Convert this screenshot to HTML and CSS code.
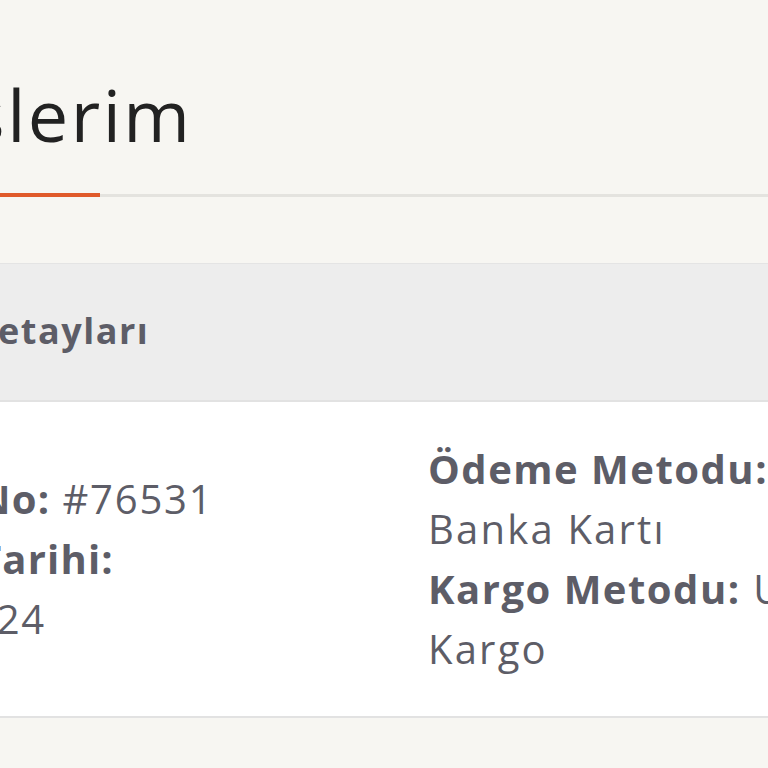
FILE: index.html
```html
<!DOCTYPE html>
<html lang="tr">
<head>
<meta charset="utf-8">
<title>Siparişlerim</title>
<link rel="stylesheet" href="styles.css">
</head>
<body>
<main class="page">
  <header class="title-block">
    <h1 class="title">Siparişlerim</h1>
  </header>
  <div class="tabs">
    <span class="tab-active"></span>
    <span class="tab-rest"></span>
  </div>
  <section class="card">
    <div class="card-head">
      <h2 class="card-title">Sipariş Detayları</h2>
    </div>
    <div class="card-body">
      <div class="col col-left">
        <p><b>Sipariş No:</b> #76531</p>
        <p><b>Sipariş Tarihi:</b> 12.03.2024</p>
      </div>
      <div class="col col-right">
        <p><b>Ödeme Metodu:</b> Banka Kartı</p>
        <p><b>Kargo Metodu:</b> UPS Kargo</p>
      </div>
    </div>
  </section>
</main>
</body>
</html>
```

FILE: styles.css
```css
html, body {
  margin: 0;
  padding: 0;
}

body {
  background: #f7f6f2;
  overflow: hidden;
  font-family: "Open Sans", "Liberation Sans", sans-serif;
  color: #5d5d67;
  width: 768px;
  height: 768px;
}

.page {
  margin-left: -242px;
  width: 1500px;
  padding-top: 78px;
}

.title-block {
  padding-left: 8px;
}

.title {
  margin: 0;
  font-size: 72px;
  line-height: 1;
  font-weight: 400;
  letter-spacing: 2.5px;
  color: #222222;
}

.tabs {
  margin-top: 43px;
  display: flex;
  align-items: center;
  height: 4px;
}

.tab-active {
  width: 342px;
  height: 4px;
  background: #e05a2b;
}

.tab-rest {
  flex: 1;
  height: 3px;
  background: #e4e3df;
}

.card {
  margin-top: 66px;
  margin-left: 22px;
  border-top: 1px solid #e4e4e4;
  border-bottom: 2px solid #e2e2e2;
  background: #ffffff;
}

.card-head {
  background: #ededed;
  padding: 40px 48px 42px;
  border-bottom: 2px solid #e2e2e2;
}

.card-title {
  margin: 0;
  font-size: 36px;
  line-height: 54px;
  font-weight: 700;
  letter-spacing: 1.5px;
  color: #5d5d67;
}

.card-body {
  display: flex;
  align-items: center;
  padding: 37px 48px 37px 44px;
}

.col p {
  margin: 0;
  font-size: 40px;
  line-height: 60px;
  letter-spacing: 2.2px;
}

.col b {
  font-weight: 700;
  letter-spacing: 1.5px;
}

.col-left p {
  letter-spacing: 1.8px;
}

.col-left b {
  letter-spacing: 1.2px;
}

.col-left {
  width: 604px;
}

.col-left p {
  max-width: 420px;
}

.col-right {
  width: 440px;
}
```
